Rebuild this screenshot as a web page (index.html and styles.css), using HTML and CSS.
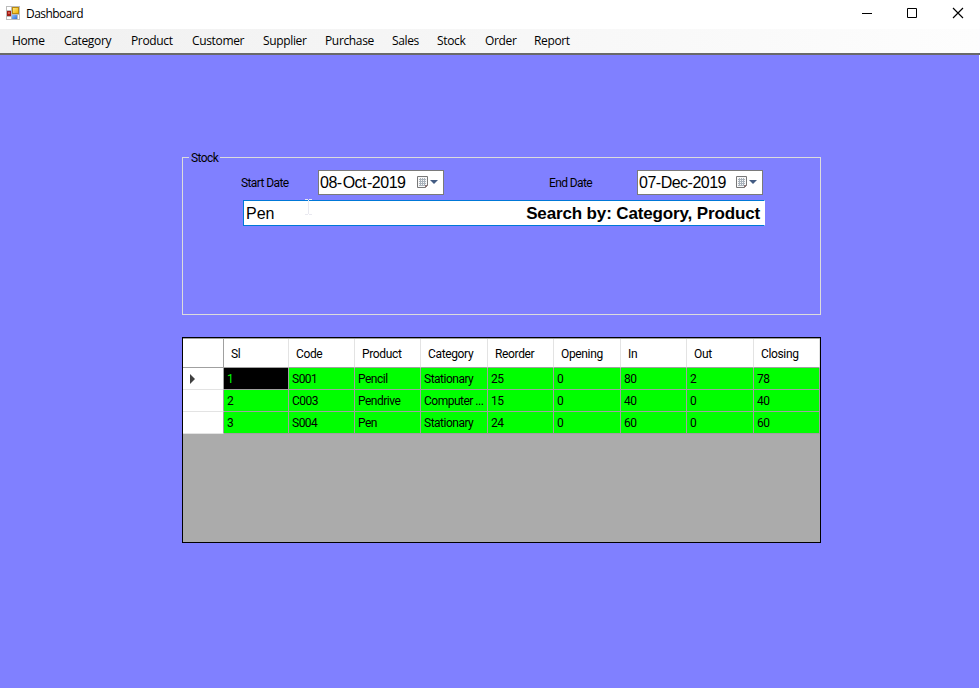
FILE: index.html
```
<!DOCTYPE html>
<html lang="en">
<head>
<meta charset="utf-8">
<title>Dashboard</title>
<link rel="stylesheet" href="styles.css">
</head>
<body>
<div class="window">
  <header class="titlebar">
    <svg class="app-icon" width="14" height="14" viewBox="0 0 14 14">
      <defs>
        <linearGradient id="gold" x2="1" y2="1"><stop stop-color="#ffe680"/><stop offset="1" stop-color="#f0b400"/></linearGradient>
        <linearGradient id="blue" x2="1" y2="1"><stop stop-color="#8fc0ff"/><stop offset="1" stop-color="#2f6fd8"/></linearGradient>
      </defs>
      <path fill="#bcbcbc" d="M0 0h14v14H0z"/>
      <path fill="#fff" d="M1 1h4v3H1zM1 11h4v2H1zM12 9h1v4h-1z"/>
      <path fill="#a01c14" d="M1 5h4v5H1z"/><path fill="#d8574a" d="M2 6h2v2H2z"/>
      <path fill="#b98a10" d="M6 1h7v7H6z"/><path fill="url(#gold)" d="M7 2h5v5H7z"/>
      <path fill="url(#blue)" d="M6 9h5v4H6z"/>
    </svg>
    <h1>Dashboard</h1>
    <svg class="controls" width="106" height="12" viewBox="0 0 106 12" fill="none" stroke="#000">
      <path d="M1 6.500h10"/>
      <path d="M46.500 1.500h9v9h-9z"/>
      <path stroke-width="1.150" d="M92 1l10 10M102 1L92 11"/>
    </svg>
  </header>
  <nav class="menu">
    <span>Home</span><span>Category</span><span>Product</span><span>Customer</span><span>Supplier</span><span>Purchase</span><span>Sales</span><span>Stock</span><span>Order</span><span>Report</span>
  </nav>
  <main>
    <fieldset class="stock">
      <legend>Stock</legend>
      <div class="dates">
        <label class="start">Start Date</label>
        <div class="picker"><span>08-<i></i>Oct<i></i>-2019</span>
          <svg width="21" height="13" viewBox="0 0 21 13"><path fill="#f8f8f8" stroke="#777" d="M.5.5h10v9l-2 2h-8z"/><path stroke="#a9b2bb" d="M2 3.500h7M2 5.500h7M2 7.500h7M2 9.500h6M3.500 2v8M5.500 2v8M7.500 2v8"/><path fill="#8a7474" d="M8 12V9h3z"/><path fill="#435c83" d="M13 4h8l-4 4z"/></svg>
        </div>
        <label class="end">End Date</label>
        <div class="picker"><span>07-Dec-2019</span>
          <svg width="21" height="13" viewBox="0 0 21 13"><path fill="#f8f8f8" stroke="#777" d="M.5.5h10v9l-2 2h-8z"/><path stroke="#a9b2bb" d="M2 3.500h7M2 5.500h7M2 7.500h7M2 9.500h6M3.500 2v8M5.500 2v8M7.500 2v8"/><path fill="#8a7474" d="M8 12V9h3z"/><path fill="#435c83" d="M13 4h8l-4 4z"/></svg>
        </div>
      </div>
      <div class="search">
        <span>Pen</span><b>Search by: Category, Product</b>
        <svg class="cursor" width="7" height="16" viewBox="0 0 7 16" fill="none" stroke="#e9e9f0"><path d="M0 .5h3M4 .5h3M3.500 1v14M0 15.500h3M4 15.500h3"/></svg>
      </div>
    </fieldset>
    <div class="table">
      <div class="row head"><div></div><div>Sl</div><div>Code</div><div>Product</div><div>Category</div><div>Reorder</div><div>Opening</div><div>In</div><div>Out</div><div>Closing</div></div>
      <div class="row"><div><svg width="5" height="10" viewBox="0 0 5 10"><path fill="#404040" d="M0 0l5 5-5 5z"/></svg></div><div class="selected">1</div><div>S001</div><div>Pencil</div><div>Stationary</div><div>25</div><div>0</div><div>80</div><div>2</div><div>78</div></div>
      <div class="row"><div></div><div>2</div><div>C003</div><div>Pendrive</div><div>Computer ...</div><div>15</div><div>0</div><div>40</div><div>0</div><div>40</div></div>
      <div class="row"><div></div><div>3</div><div>S004</div><div>Pen</div><div>Stationary</div><div>24</div><div>0</div><div>60</div><div>0</div><div>60</div></div>
    </div>
  </main>
</div>
</body>
</html>
```
FILE: styles.css
```
* { box-sizing: border-box; }
body { margin: 0; background: #fff; color: #000; }
.window {
  width: 980px;
  height: 688px;
  display: flex;
  flex-direction: column;
  overflow: hidden;
  font: 12px/16px "Open Sans", sans-serif;
}
.titlebar {
  height: 29px;
  display: flex;
  align-items: flex-start;
  padding: 6px 12px 0 6px;
}
h1 { margin: 0 auto 0 6px; font: inherit; letter-spacing: -0.55px; }
.app-icon { display: block; }
.controls { margin: 1px 1px 0 0; }
.menu {
  height: 26px;
  display: grid;
  grid-template-columns: 52px 67px 61px 71px 62px 67px 45px 48px 49px 60px;
  padding: 4px 0 0 12px;
  background: linear-gradient(90deg, #f0f0f0, #fdfdfd);
  border-bottom: 2px solid #696969;
  border-image: linear-gradient(#a0a0a0 50%, #696969 50%) 2;
  border-width: 0 0 2px;
  letter-spacing: -0.35px;
}
main {
  flex: 1;
  margin-right: 1px;
  padding: 95px 0 0 182px;
  background: #8080ff;
  font: 12px/16px Roboto, "Liberation Sans", sans-serif;
}
.stock {
  width: 639px;
  height: 165px;
  margin: 0;
  padding: 5px 0 0;
  border: 1px solid #dcdcdc;
}
legend {
  margin-left: 6px;
  padding: 0 2px;
  height: 15px;
  letter-spacing: -0.6px;
}
.dates { display: flex; align-items: center; padding-left: 58px; }
.dates label { letter-spacing: -0.6px; white-space: nowrap; }
.start { width: 77px; }
.end { width: 88px; margin-left: 105px; }
.picker {
  width: 126px;
  height: 25px;
  display: flex;
  align-items: center;
  justify-content: space-between;
  padding: 1px 5px 0 1px;
  background: #fff;
  border: 1px solid #7a7a7a;
  font: 16px/16px "Liberation Sans", Arial, sans-serif;
  white-space: nowrap;
}
.picker span { letter-spacing: -0.5px; }
.picker svg { margin-top: -1px; }
.picker i { display: inline-block; width: 1px; }
.search {
  position: relative;
  width: 522px;
  height: 26px;
  display: flex;
  align-items: center;
  justify-content: space-between;
  margin: 5px 0 0 60px;
  padding: 1px 4px 0 2px;
  background: #fff;
  border: 1px solid #0078d7;
  border-right-color: #fff;
  font: 16px/16px "Liberation Sans", Arial, sans-serif;
}
.search b { font-size: 17px; letter-spacing: -0.14px; }
.cursor { position: absolute; left: 61px; top: -2px; }
.table {
  width: 639px;
  height: 206px;
  margin-top: 22px;
  padding-top: 1px;
  background: linear-gradient(#a0a0a0 1px, #ababab 1px);
  border: 1px solid #000;
}
.row {
  display: grid;
  grid-template-columns: 41px 65px 66px 66px 67px 66px 67px 66px 67px 66px;
  grid-template-rows: 100%;
  height: 22px;
  line-height: 22px;
  letter-spacing: -0.5px;
}
.row > div {
  padding-left: 3px;
  border-right: 1px solid #a0a0a0;
  border-bottom: 1px solid #a0a0a0;
  background: #0f0;
  white-space: nowrap;
}
.row > div:first-child {
  display: flex;
  align-items: center;
  padding-left: 7px;
  background: #fff;
  border-right-color: #a0a0a0;
  border-bottom-color: #e3e3e3;
}
.row > .selected { background: #000; color: #0f0; }
.row.head { height: 29px; line-height: 30px; letter-spacing: -0.35px; }
.row.head > div { padding-left: 7px; background: #fff; border-right-color: #e3e3e3; }
.row.head > div:first-child { border-right-color: #a0a0a0; border-bottom-color: #a0a0a0; }
```
